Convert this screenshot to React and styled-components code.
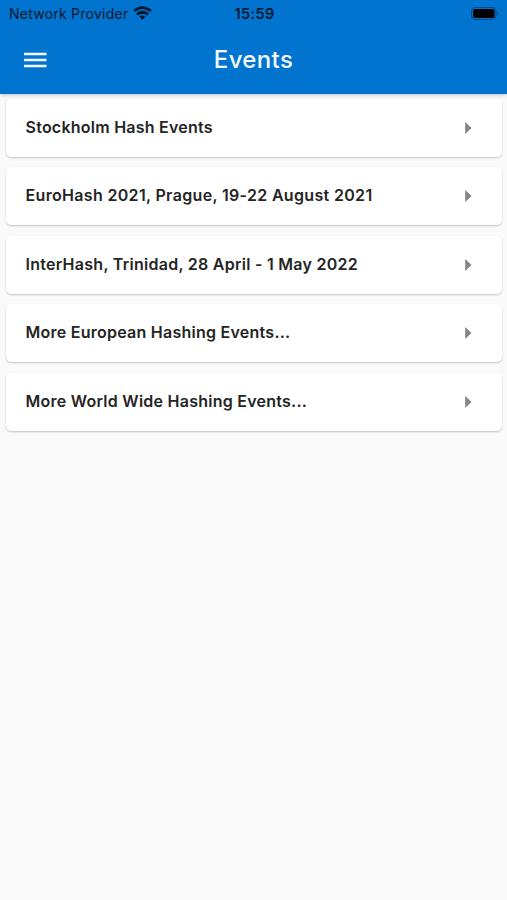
import React from "react";
import styled, { createGlobalStyle } from "styled-components";

const Global = createGlobalStyle`
  * { box-sizing: border-box; }
  body { margin: 0; background: #fafafa; font-family: Inter, sans-serif; }
`;
const Screen = styled.main`
  min-height: 900px;
  background: #fafafa;
`;
const Header = styled.header`
  height: 94px;
  background: #0174d0;
  box-shadow: 0 1px 4px rgba(0, 0, 0, 0.22);
`;
const StatusBar = styled.div`
  height: 27px;
  padding: 0 7px 0 9px;
  display: grid;
  grid-template-columns: 1fr auto 1fr;
  align-items: center;
  color: #03182c;
  font-size: 14px;
`;
const Carrier = styled.div`
  display: flex;
  align-items: center;
  gap: 5px;
  white-space: nowrap;
  letter-spacing: 0.24px;
`;
const WifiIcon = styled.svg`
  margin-bottom: 2px;
`;
const Clock = styled.time`
  font-weight: 600;
  font-size: 14.5px;
  letter-spacing: 0.35px;
`;
const Battery = styled.svg`
  justify-self: end;
`;
const Toolbar = styled.div`
  height: 65px;
  padding: 0 23px;
  display: grid;
  grid-template-columns: 1fr auto 1fr;
  align-items: center;
`;
const MenuButton = styled.button`
  border: 0;
  padding: 0;
  background: none;
  display: flex;
`;
const Title = styled.h1`
  margin: 0;
  color: #f4f9ff;
  font-size: 24px;
  font-weight: 500;
  letter-spacing: 0.35px;
`;
const List = styled.ul`
  margin: 0;
  padding: 5px 5px 0 6px;
  list-style: none;
  display: flex;
  flex-direction: column;
  gap: 10.4px;
`;
const Card = styled.li`
  height: 58px;
  padding: 0 30px 0 19.5px;
  display: flex;
  align-items: center;
  justify-content: space-between;
  background: #fff;
  border-radius: 5px;
  box-shadow: 0 1px 2px rgba(0, 0, 0, 0.22);
`;
const Label = styled.span`
  color: #242424;
  font-size: 16px;
  font-weight: 600;
  line-height: 20px;
  padding-bottom: 2px;
  letter-spacing: ${({ $tracking }) => $tracking}px;
  white-space: nowrap;
`;

const events = [
  { name: "Stockholm Hash Events", tracking: 0.24 },
  { name: "EuroHash 2021, Prague, 19-22 August 2021", tracking: 0.33 },
  { name: "InterHash, Trinidad, 28 April - 1 May 2022", tracking: 0.27 },
  { name: "More European Hashing Events...", tracking: 0.25 },
  { name: "More World Wide Hashing Events...", tracking: 0.25 },
];

export default function App() {
  return (
    <Screen>
      <Global />
      <Header>
        <StatusBar>
          <Carrier>
            Network Provider
            <WifiIcon width="19" height="14" viewBox="0 0 19 14" fill="none" stroke="#03182c" strokeWidth="2.7">
              <path d="M1.2 5Q9.5-1.8 17.8 5M4 8.3Q9.5 4.2 15 8.3" />
              <path d="M6.5 10.6Q9.5 8.6 12.5 10.6L9.5 13.7Z" fill="#03182c" stroke="none" />
            </WifiIcon>
          </Carrier>
          <Clock>15:59</Clock>
          <Battery width="29" height="13" viewBox="0 0 29 13">
            <rect x=".5" y=".5" width="24.5" height="12" rx="3.5" fill="none" stroke="#03182c" strokeOpacity=".45" />
            <rect x="2" y="2" width="21.5" height="9" rx="2" fill="#000" />
            <path d="M26.5 4.5Q28.5 6.5 26.5 8.5Z" fill="#03182c" fillOpacity=".5" />
          </Battery>
        </StatusBar>
        <Toolbar>
          <MenuButton aria-label="Menu">
            <svg width="24" height="16" viewBox="0 0 24 16" stroke="#f4f9ff" strokeWidth="2.5">
              <path d="M1 2H23.5M1 8H23.5M1 14H23.5" />
            </svg>
          </MenuButton>
          <Title>Events</Title>
        </Toolbar>
      </Header>
      <List>
        {events.map(({ name, tracking }) => (
          <Card key={name}>
            <Label $tracking={tracking}>{name}</Label>
            <svg width="7" height="12" viewBox="0 0 7 12">
              <path d="M.2 0L6.5 6L.2 12Z" fill="#858585" />
            </svg>
          </Card>
        ))}
      </List>
    </Screen>
  );
}
